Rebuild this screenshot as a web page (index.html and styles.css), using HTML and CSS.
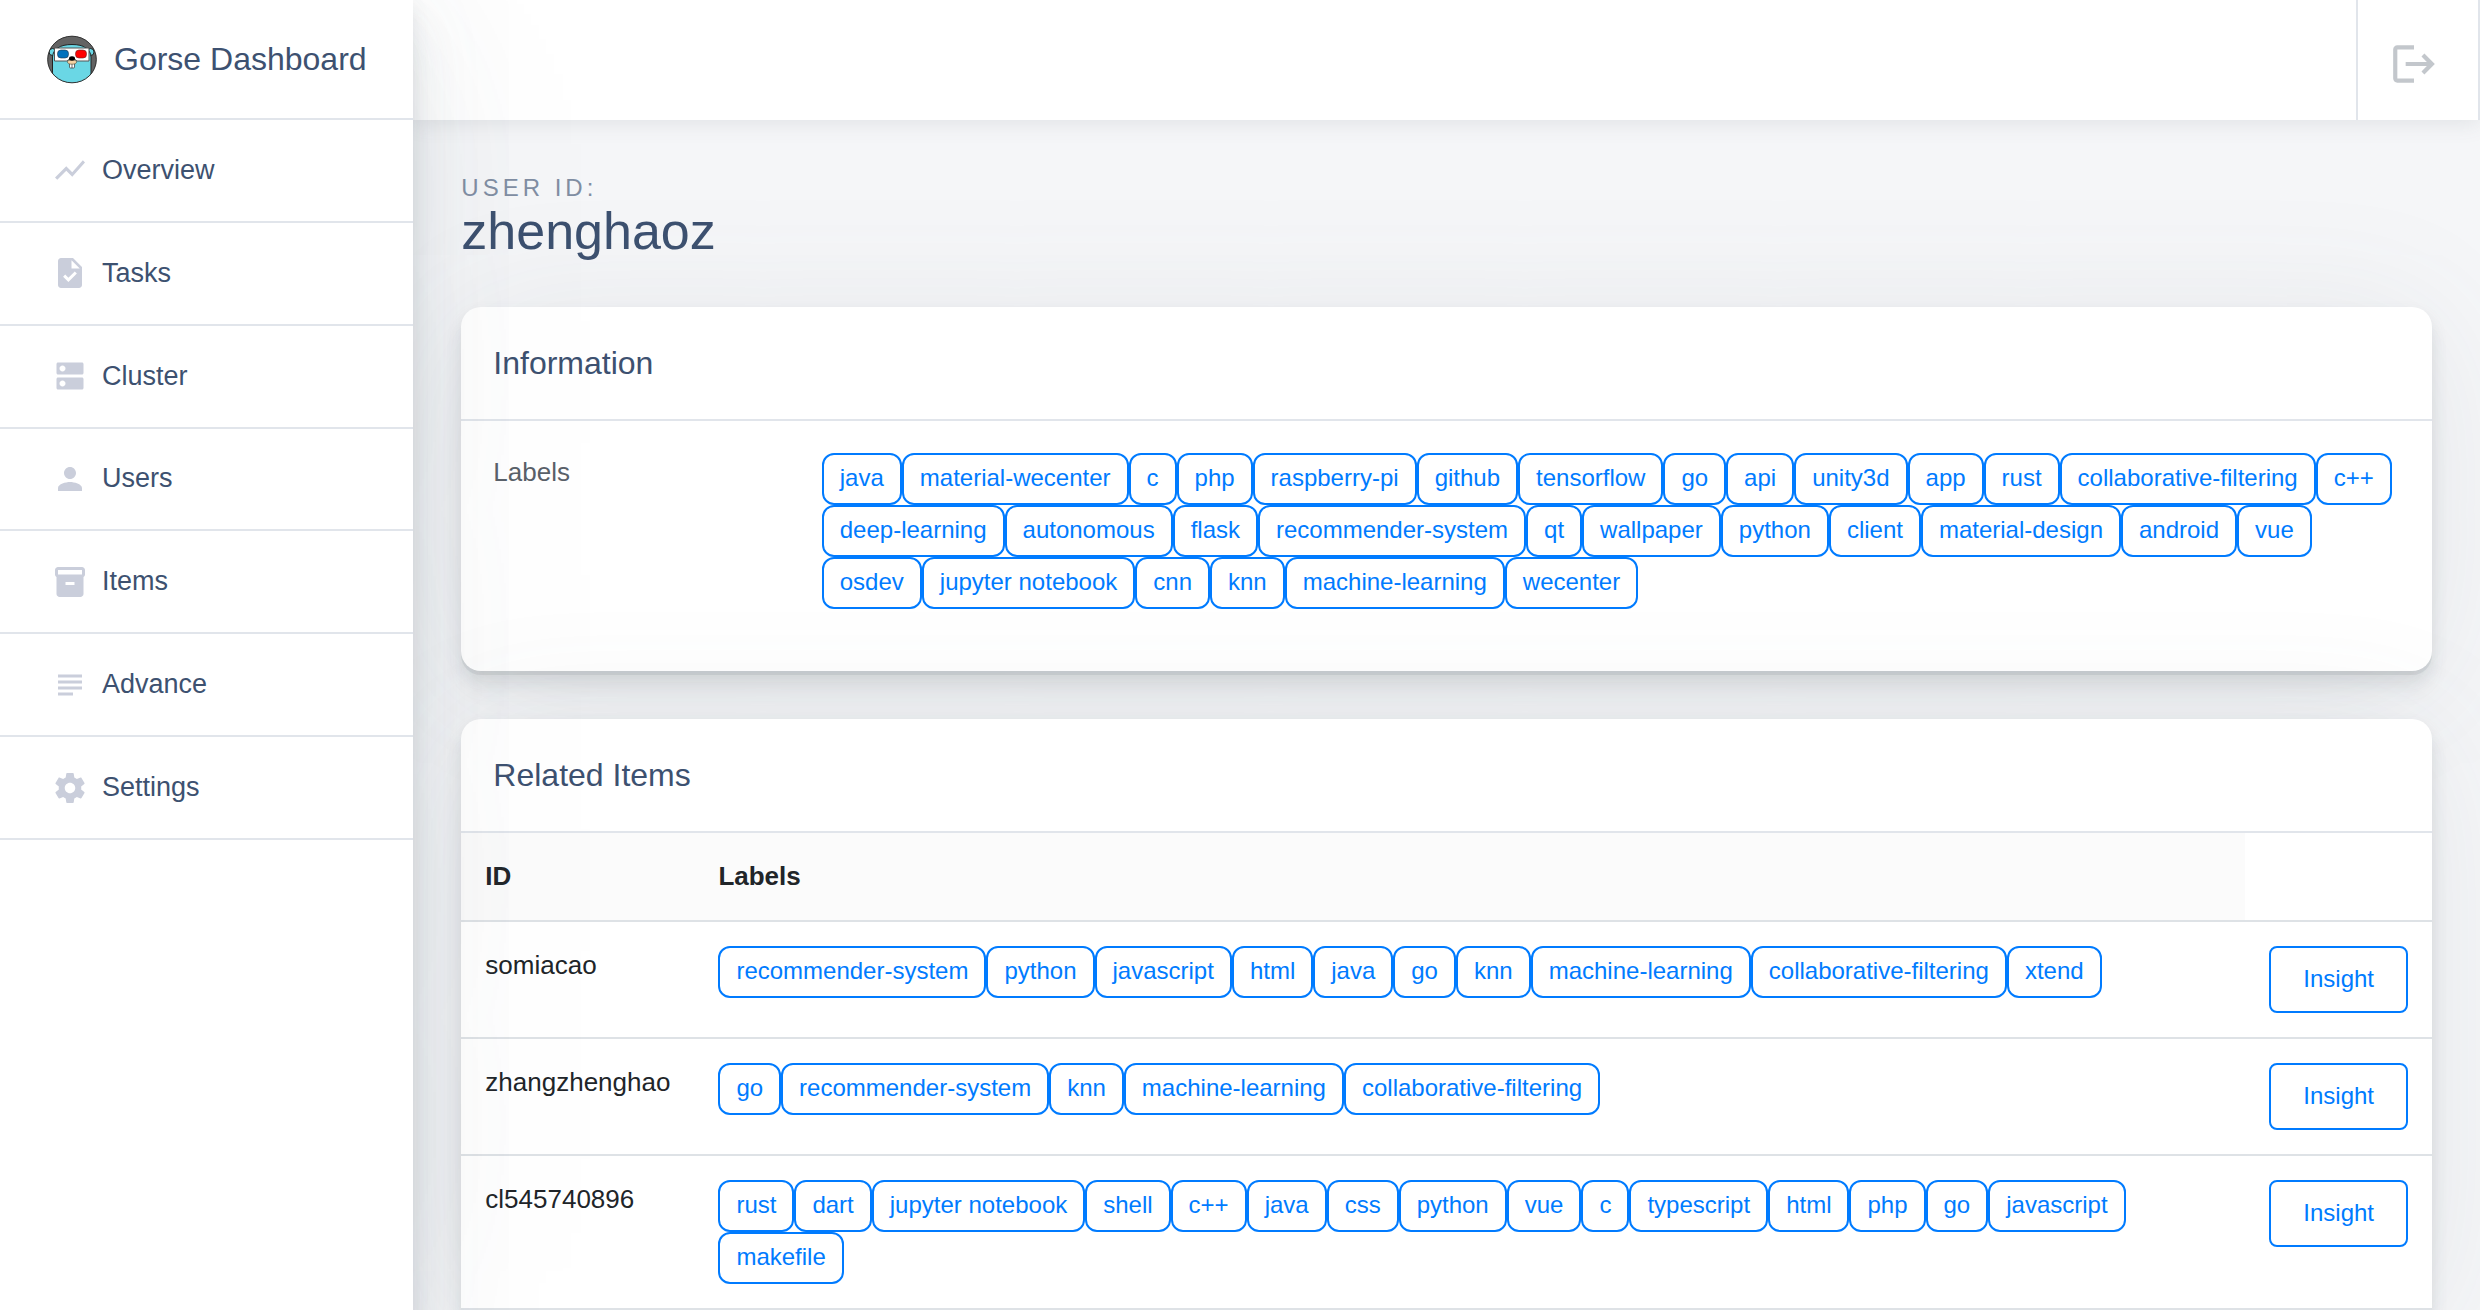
FILE: index.html
```html
<!DOCTYPE html>
<html lang="en">
<head>
<meta charset="utf-8">
<title>Gorse Dashboard</title>
<link rel="stylesheet" href="styles.css">
</head>
<body>
<div class="layout">
  <aside class="sidebar">
    <a class="brand" href="#">
      <svg class="brand-logo" viewBox="0 0 50 50" aria-hidden="true">
        <defs><clipPath id="disc"><ellipse cx="25" cy="24.5" rx="24.5" ry="23.5"/></clipPath></defs>
        <g clip-path="url(#disc)">
          <rect width="50" height="50" fill="#636363"/>
          <circle cx="5.500" cy="17" r="3.500" fill="#6ad7e5" stroke="#222" stroke-width="1"/>
          <circle cx="43.500" cy="17" r="3.500" fill="#6ad7e5" stroke="#222" stroke-width="1"/>
          <path d="M5.500 50V22C6 14 13 9.500 25 9.500S43.500 14 44 22V50Z" fill="#6ad7e5" stroke="#222" stroke-width="1"/>
        </g>
        <ellipse cx="25" cy="24.500" rx="24.300" ry="23.300" fill="none" stroke="#333" stroke-width="1"/>
        <path d="M7.500 13H42V26H30L25 22L20 26H7.500Z" fill="#fff" stroke="#555" stroke-width="1"/>
        <rect x="10.500" y="15" width="11" height="8" rx="3.500" fill="#0071bc" stroke="#234" stroke-width=".6"/>
        <rect x="28.500" y="15" width="11" height="8" rx="3.500" fill="#f00" stroke="#622" stroke-width=".6"/>
        <rect x="22.500" y="28" width="5" height="5" rx="1" fill="#fff" stroke="#333" stroke-width=".7"/>
        <path d="M25 28V33" stroke="#333" stroke-width=".7"/>
        <ellipse cx="25" cy="27" rx="4.500" ry="2.200" fill="#f6d2a2" stroke="#443" stroke-width=".6"/>
        <ellipse cx="25" cy="23.500" rx="3" ry="2.200" fill="#000"/>
      </svg>
      <span>Gorse Dashboard</span>
    </a>
    <nav class="menu">
      <a href="#"><svg viewBox="0 0 24 24"><path d="M3.500 18.490l6-6.010 4 4L22 6.920l-1.410-1.410-7.090 7.970-4-4L2 16.990z"/></svg>Overview</a>
      <a href="#"><svg viewBox="0 0 24 24"><path d="M14 2H6c-1.100 0-1.990.9-1.990 2L4 20c0 1.100.89 2 1.990 2H18c1.100 0 2-.9 2-2V8l-6-6zm-3.060 16L7.400 14.460l1.410-1.410 2.120 2.120 4.240-4.240 1.410 1.410L10.940 18zM13 9V3.500L18.500 9H13z"/></svg>Tasks</a>
      <a href="#"><svg viewBox="0 0 24 24"><path d="M20 13H4c-.55 0-1 .45-1 1v6c0 .55.45 1 1 1h16c.55 0 1-.45 1-1v-6c0-.55-.45-1-1-1zM7 19c-1.100 0-2-.9-2-2s.9-2 2-2 2 .9 2 2-.9 2-2 2zM20 3H4c-.55 0-1 .45-1 1v6c0 .55.45 1 1 1h16c.55 0 1-.45 1-1V4c0-.55-.45-1-1-1zM7 9c-1.100 0-2-.9-2-2s.9-2 2-2 2 .9 2 2-.9 2-2 2z"/></svg>Cluster</a>
      <a href="#"><svg viewBox="0 0 24 24"><path d="M12 12c2.210 0 4-1.790 4-4s-1.790-4-4-4-4 1.790-4 4 1.790 4 4 4zm0 2c-2.670 0-8 1.340-8 4v2h16v-2c0-2.660-5.330-4-8-4z"/></svg>Users</a>
      <a href="#"><svg viewBox="0 0 24 24"><path d="M20 2H4c-1 0-2 .9-2 2v3.010c0 .72.43 1.340 1 1.690V20c0 1.100 1.100 2 2 2h14c.9 0 2-.9 2-2V8.700c.57-.35 1-.97 1-1.690V4c0-1.100-1-2-2-2zm-5 12H9v-2h6v2zm5-7H4V4h16v3z"/></svg>Items</a>
      <a href="#"><svg viewBox="0 0 24 24"><path d="M14 17H4v2h10v-2zm6-8H4v2h16V9zM4 15h16v-2H4v2zM4 5v2h16V5H4z"/></svg>Advance</a>
      <a href="#"><svg viewBox="0 0 24 24"><path d="M19.430 12.980c.04-.32.07-.64.07-.98s-.03-.66-.07-.98l2.110-1.650c.19-.15.24-.42.12-.64l-2-3.460c-.12-.22-.39-.3-.61-.22l-2.490 1c-.52-.4-1.080-.73-1.690-.98l-.38-2.650C14.460 2.180 14.250 2 14 2h-4c-.25 0-.46.18-.49.42l-.38 2.650c-.61.25-1.170.59-1.690.98l-2.490-1c-.23-.09-.49 0-.61.22l-2 3.460c-.13.22-.07.49.12.64l2.110 1.650c-.04.32-.07.65-.07.98s.03.66.07.98l-2.110 1.650c-.19.15-.24.42-.12.64l2 3.460c.12.22.39.3.61.22l2.490-1c.52.4 1.080.73 1.690.98l.38 2.650c.03.24.24.42.49.42h4c.25 0 .46-.18.49-.42l.38-2.650c.61-.25 1.170-.59 1.690-.98l2.490 1c.23.09.49 0 .61-.22l2-3.460c.12-.22.07-.49-.12-.64l-2.110-1.650zM12 15.500c-1.930 0-3.500-1.570-3.500-3.500s1.570-3.500 3.500-3.500 3.500 1.570 3.500 3.500-1.570 3.500-3.500 3.500z"/></svg>Settings</a>
    </nav>
  </aside>

  <main class="main">
    <header class="topbar">
      <a class="logout" href="#" aria-label="Log out">
        <svg viewBox="0 0 24 24"><path d="M17 7l-1.410 1.410L18.170 11H8v2h10.170l-2.580 2.580L17 17l5-5zM4 5h8V3H4c-1.100 0-2 .9-2 2v14c0 1.100.9 2 2 2h8v-2H4z"/></svg>
      </a>
    </header>

    <div class="content">
      <div class="page-header">
        <span class="page-subtitle">User ID:</span>
        <h1 class="page-title">zhenghaoz</h1>
      </div>

      <section class="card">
        <h2 class="card-header">Information</h2>
        <dl class="info">
          <dt>Labels</dt>
          <dd class="tags">
            <span>java</span><span>material-wecenter</span><span>c</span><span>php</span><span>raspberry-pi</span><span>github</span><span>tensorflow</span><span>go</span><span>api</span><span>unity3d</span><span>app</span><span>rust</span><span>collaborative-filtering</span><span>c++</span><span>deep-learning</span><span>autonomous</span><span>flask</span><span>recommender-system</span><span>qt</span><span>wallpaper</span><span>python</span><span>client</span><span>material-design</span><span>android</span><span>vue</span><span>osdev</span><span>jupyter notebook</span><span>cnn</span><span>knn</span><span>machine-learning</span><span>wecenter</span>
          </dd>
        </dl>
      </section>

      <section class="card card-table">
        <h2 class="card-header">Related Items</h2>
        <table class="items">
          <thead>
            <tr><th scope="col">ID</th><th scope="col" class="wide">Labels</th><td></td></tr>
          </thead>
          <tbody>
            <tr>
              <td>somiacao</td>
              <td><div class="tags"><span>recommender-system</span><span>python</span><span>javascript</span><span>html</span><span>java</span><span>go</span><span>knn</span><span>machine-learning</span><span>collaborative-filtering</span><span>xtend</span></div></td>
              <td><button type="button" class="insight">Insight</button></td>
            </tr>
            <tr>
              <td>zhangzhenghao</td>
              <td><div class="tags"><span>go</span><span>recommender-system</span><span>knn</span><span>machine-learning</span><span>collaborative-filtering</span></div></td>
              <td><button type="button" class="insight">Insight</button></td>
            </tr>
            <tr>
              <td>cl545740896</td>
              <td><div class="tags"><span>rust</span><span>dart</span><span>jupyter notebook</span><span>shell</span><span>c++</span><span>java</span><span>css</span><span>python</span><span>vue</span><span>c</span><span>typescript</span><span>html</span><span>php</span><span>go</span><span>javascript</span><span>makefile</span></div></td>
              <td><button type="button" class="insight">Insight</button></td>
            </tr>
          </tbody>
        </table>
      </section>
    </div>
  </main>
</div>
</body>
</html>
```
FILE: styles.css
```css
* { box-sizing: border-box; }

body {
  margin: 0;
  background: #f5f6f8;
  color: #212529;
  font: 26px/39px "Liberation Sans", Arial, sans-serif;
}

a { color: inherit; text-decoration: none; }

.layout {
  display: grid;
  grid-template-columns: 1fr 5fr;
  min-height: 100vh;
  overflow: hidden;
}

/* Sidebar */
.sidebar {
  position: relative;
  z-index: 2;
  background: #fff;
  color: #3d5170;
  box-shadow:
    0 4px 300px rgba(90, 97, 105, .1),
    0 8px 16px rgba(90, 97, 105, .12),
    0 30px 44px rgba(90, 97, 105, .1),
    0 14px 70px rgba(165, 182, 201, .1);
}

.brand {
  display: flex;
  align-items: center;
  gap: 17px;
  height: 120px;
  padding: 1px 0 0 47px;
  border-bottom: 2px solid #e1e5eb;
  font-size: 32px;
}

.brand-logo { width: 50px; height: 50px; }

.menu {
  display: grid;
  grid-auto-rows: 1fr;
  height: 720px;
}

.menu a {
  display: flex;
  align-items: center;
  gap: 14px;
  padding-left: 52px;
  border-bottom: 2px solid #e1e5eb;
  font-size: 27px;
}

.menu svg { width: 36px; height: 36px; fill: #cacedb; }

/* Top bar */
.main { min-width: 0; }

.topbar {
  position: relative;
  display: flex;
  justify-content: flex-end;
  height: 120px;
  background: #fff;
  box-shadow: 0 4px 20px rgba(90, 97, 105, .12);
}

.logout {
  display: flex;
  align-items: center;
  justify-content: center;
  width: 124px;
  padding-top: 8px;
  padding-right: 8px;
  border: solid #e1e5eb;
  border-width: 0 2px;
}

.logout svg { width: 50px; height: 50px; fill: #c3c7cc; }

/* Page content */
.content {
  display: flex;
  flex-direction: column;
  gap: 48px;
  padding: 48px;
}

.page-header { padding-bottom: 3px; color: #3d5170; }

.page-subtitle {
  display: block;
  color: #818ea3;
  font-size: 24px;
  letter-spacing: 4px;
  text-transform: uppercase;
}

.page-title {
  margin: 0;
  font-size: 52px;
  font-weight: 400;
  line-height: 49px;
}

.card {
  position: relative;
  background: #fff;
  border-radius: 20px;
  box-shadow:
    0 4px 0 rgba(90, 97, 105, .11),
    0 8px 16px rgba(90, 97, 105, .12),
    0 20px 20px rgba(90, 97, 105, .06),
    0 14px 140px rgba(90, 97, 105, .1);
}

.card-table { border-radius: 20px 20px 0 0; }

.card-header {
  margin: 0;
  padding: 32px;
  border-bottom: 2px solid #e1e5eb;
  color: #3d5170;
  font-size: 32px;
  font-weight: 400;
  line-height: 48px;
}

.info {
  display: grid;
  grid-template-columns: 1fr 5fr;
  margin: 0;
  padding: 32px 0 62px;
  color: #5a6169;
}

.info dt, .info dd { margin: 0; padding: 0 32px; }

.tags { display: flex; flex-wrap: wrap; align-content: flex-start; }

.tags span {
  padding: 8px 16px;
  padding-bottom: 10px;
  border: 2px solid #007bff;
  border-radius: 12px;
  color: #007bff;
  font-size: 24px;
  line-height: 30px;
  white-space: nowrap;
}

/* Related items */
.items { width: 100%; border-collapse: separate; border-spacing: 0; }

.items th, .items td {
  padding: 24px;
  border-bottom: 2px solid #dee2e6;
  text-align: left;
  vertical-align: top;
}

.items th { background: #fbfbfb; }
.items .wide { width: 100%; }

.insight {
  display: block;
  padding: 17px 32px 19px;
  border: 2px solid #007bff;
  border-radius: 8px;
  background: #fff;
  color: #007bff;
  font: 24px/27px "Liberation Sans", Arial, sans-serif;
}
```
